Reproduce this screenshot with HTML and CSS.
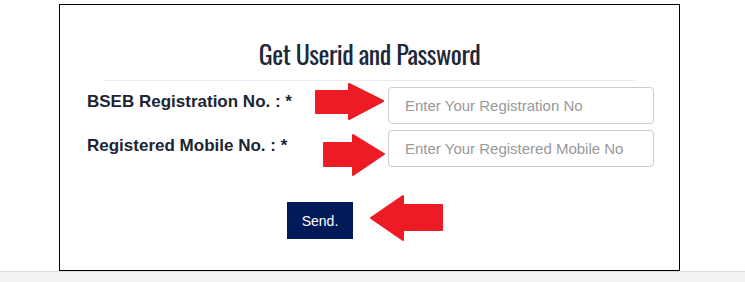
FILE: index.html
```html
<!DOCTYPE html>
<html lang="en">
<head>
    <meta charset="UTF-8">
    <meta name="viewport" content="width=device-width, initial-scale=1.0">
    <title>Get Userid and Password</title>
    <link rel="stylesheet" href="styles.css">
</head>
<body>
    <div class="panel">
        <h2 class="panel-title">Get Userid and Password</h2>
        <hr class="divider">

        <form class="reg-form" onsubmit="return false;">
            <div class="form-row">
                <label for="regno">BSEB Registration No. : *</label>
                <input type="text" id="regno" placeholder="Enter Your Registration No">
            </div>
            <div class="form-row">
                <label for="mobile">Registered Mobile No. : *</label>
                <input type="text" id="mobile" placeholder="Enter Your Registered Mobile No">
            </div>
            <div class="form-actions">
                <button type="submit" class="btn-send">Send.</button>
            </div>
        </form>

        <!-- arrows drawn over the form -->
        <svg class="arrow arrow-reg" width="69" height="37" viewBox="0 0 69 37">
            <polygon points="1,8 34,8 34,1 68,18 34,36 34,30 1,30"/>
        </svg>
        <svg class="arrow arrow-mobile" width="62" height="42" viewBox="0 0 62 42">
            <polygon points="1,9 30,9 30,1 61,20 30,41 30,32 1,32"/>
        </svg>
        <svg class="arrow arrow-send" width="73" height="46" viewBox="0 0 73 46">
            <polygon points="1,23 33,1 33,10 72,10 72,35 33,35 33,45"/>
        </svg>
    </div>
    <div class="page-footer"></div>
</body>
</html>
```

FILE: styles.css
```css
* {
    margin: 0;
    padding: 0;
    box-sizing: border-box;
}

body {
    font-family: 'Liberation Sans', Arial, sans-serif;
    background: #fff;
    padding-top: 4px;
}

.panel {
    position: relative;
    margin-left: 59px;
    width: 621px;
    height: 267px;
    border: 1px solid #000;
    background: #fff;
}

.panel-title {
    font-family: 'Oswald', 'Liberation Sans Narrow', 'DejaVu Sans Condensed', sans-serif;
    font-weight: normal;
    font-size: 26px;
    line-height: 32px;
    color: #1d2838;
    text-align: center;
    margin-top: 33px;
    letter-spacing: -0.5px;
}

.divider {
    border: none;
    border-top: 1px solid #eaeaea;
    margin: 10px 45px 0 44px;
}

.reg-form {
    padding-left: 27px;
    margin-top: 6px;
}

.form-row {
    display: flex;
    align-items: flex-start;
    margin-bottom: 6px;
}

.form-row label {
    width: 301px;
    font-size: 17px;
    font-weight: bold;
    color: #1c2533;
    padding-top: 5px;
}

.form-row + .form-row label {
    padding-top: 6px;
}

.form-row input {
    width: 266px;
    height: 37px;
    padding: 0 16px;
    border: 1px solid #ccc;
    border-radius: 4px;
    font-family: 'Liberation Sans', Arial, sans-serif;
    font-size: 15px;
    color: #555;
}

.form-row input::placeholder {
    color: #999;
}

.form-actions {
    margin-top: 35px;
    padding-left: 200px;
}

.btn-send {
    width: 66px;
    height: 37px;
    background: #001a57;
    color: #fff;
    border: none;
    font-family: 'Liberation Sans', Arial, sans-serif;
    font-size: 14px;
    cursor: pointer;
}

.arrow {
    position: absolute;
    fill: #ed1c24;
    stroke: #ed1c24;
    stroke-width: 2;
    stroke-linejoin: round;
}

.arrow-reg {
    left: 255px;
    top: 78px;
}

.arrow-mobile {
    left: 263px;
    top: 129px;
}

.arrow-send {
    left: 310px;
    top: 190px;
}

.page-footer {
    height: 11px;
    background: #f2f2f2;
    border-top: 1px solid #dcdcdc;
}
```
